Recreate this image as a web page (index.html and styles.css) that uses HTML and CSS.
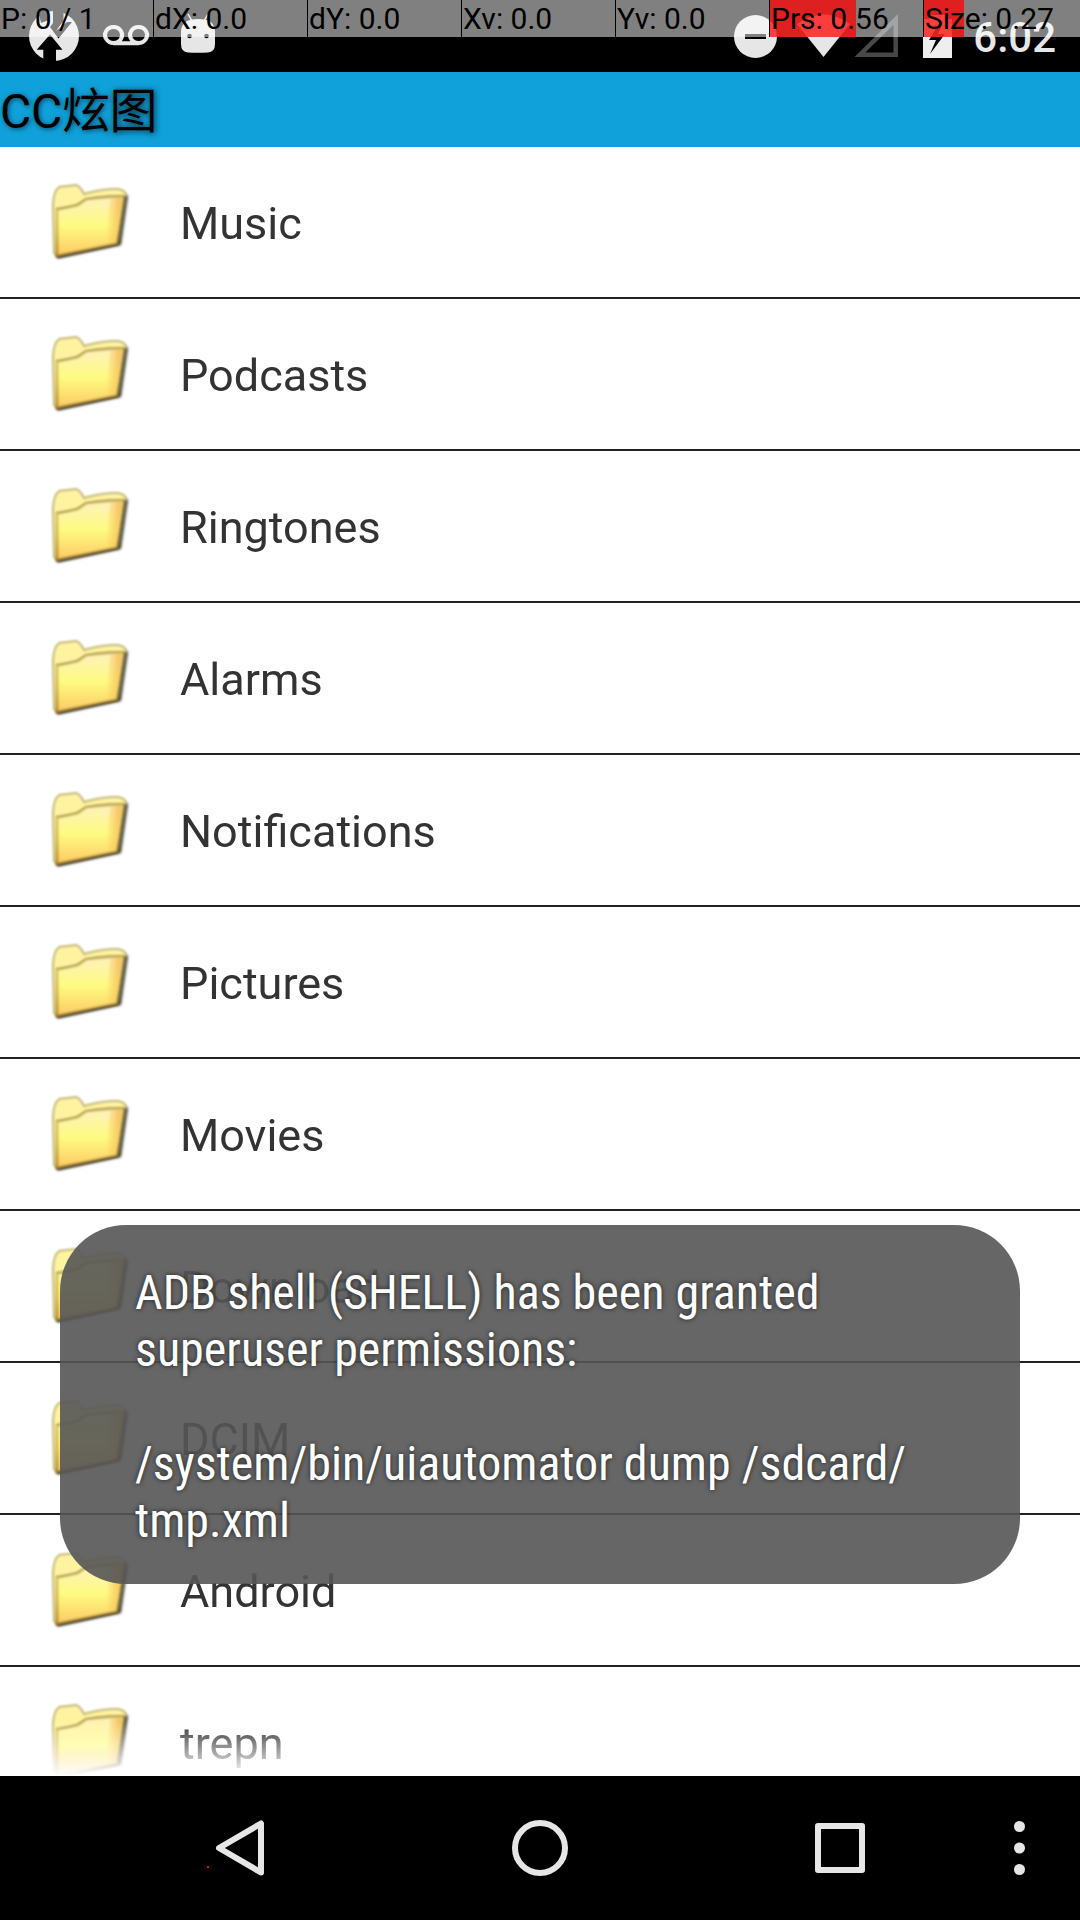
FILE: index.html
```html
<!DOCTYPE html>
<html lang="zh">
<head>
<meta charset="utf-8">
<title>CC炫图</title>
<link rel="stylesheet" href="styles.css">
</head>
<body>
<div class="screen">
  <header class="status">
    <svg class="status-icons" viewBox="0 0 1080 72">
      <g fill="#e6e6e6">
        <circle cx="54" cy="36" r="25"/>
        <path fill="none" stroke="#e6e6e6" stroke-width="4" d="M113.500 27a8.500 8 0 1 0 .1 0zM138.500 27a8.500 8 0 1 0 .1 0zM113 43.200h26"/>
        <path d="M181 32q0-13 17-13t17 13v12q0 8-7 8.500-10 .7-20 0-7-.5-7-8.500z"/>
        <path fill="none" stroke="#e6e6e6" stroke-width="1.500" d="M188 14l4 7M208 14l-4 7"/>
        <circle cx="755.500" cy="36.500" r="21.500"/>
        <path d="M797 24q26.500-19 53 0l-26.500 33z"/>
        <path fill="#eee" d="M923 19h7v-4h15v4h7v39h-29z"/>
      </g>
      <g fill="#000">
        <path d="M50 34.500l12.500 15.200H56V62H43.300V49.700h-6.600z"/>
        <path d="M53 9h10.500v13H72L58.500 38.500 50 27l3-4zM38 9h11v11l-8 3z"/>
        <path fill="#e6e6e6" d="M56 31l11-9h-4.500z"/>
        <circle cx="189.500" cy="36" r="2.300"/><circle cx="206.500" cy="36" r="2.300"/>
        <path d="M745 34h21v5h-21zM940 22l-11 18h7l-6 14 15-20h-7l5-12z"/>
      </g>
      <path fill="none" stroke="#484848" stroke-width="4.500" d="M860 54.700h35.700V19.500z"/>
    </svg>
    <span class="clock">6:02</span>
    <div class="pointer">
      <div class="cell">P: 0 / 1</div>
      <div class="cell">dX: 0.0</div>
      <div class="cell">dY: 0.0</div>
      <div class="cell">Xv: 0.0</div>
      <div class="cell">Yv: 0.0</div>
      <div class="cell pressure">Prs: 0.56</div>
      <div class="cell size">Size: 0.27</div>
    </div>
  </header>
  <h1 class="title">CC炫<span class="glow">图</span></h1>
  <svg class="defs" width="0" height="0">
    <defs>
      <linearGradient id="front" x1="0" y1="0" x2="0" y2="1">
        <stop offset="0" stop-color="#fff0c0"/><stop offset=".5" stop-color="#fdfb80"/><stop offset="1" stop-color="#fdc865"/>
      </linearGradient>
      <linearGradient id="edge" x1="0" y1="0" x2="0" y2="1">
        <stop offset="0" stop-color="#d8cc80"/><stop offset=".6" stop-color="#d6b64c"/><stop offset="1" stop-color="#b08c34"/>
      </linearGradient>
      <linearGradient id="side" x1="0" y1="0" x2="1" y2="0">
        <stop offset="0" stop-color="#fbc860" stop-opacity="0"/><stop offset="1" stop-color="#f5b850"/>
      </linearGradient>
      <filter id="soft" x="-20%" y="-20%" width="140%" height="140%"><feGaussianBlur stdDeviation="1.500"/></filter>
      <filter id="smooth"><feGaussianBlur stdDeviation="1"/></filter>
      <symbol id="folder" viewBox="0 0 120 120">
        <path fill="#444" filter="url(#soft)" d="M28 96.500l63-13.500 7-49-7-3-8 46-58 14z"/>
        <g filter="url(#smooth)">
          <path fill="#fff3a0" stroke="#c0b678" stroke-width="2" d="M23 45q0-15 6-20l17-2q4 1 8 9 18-5 31-5 9 0 11 5l-7 46-62 15-3-2z"/>
          <path fill="url(#front)" stroke="url(#edge)" stroke-width="3" d="M27 47l21-4 8-6 38-3-7 48-60 12z"/>
          <path fill="url(#side)" d="M80 37l12-2-7 45-10 2z"/>
          <path fill="none" stroke="#b19a42" stroke-width="1.700" d="M26 47q14-1 22-5l8-5q20-4 38-3"/>
          <path fill="none" stroke="#6e5a2e" stroke-width="2.200" d="M27 95l61-13 7-48"/>
        </g>
      </symbol>
    </defs>
  </svg>
  <ul class="list">
    <li class="row"><svg class="icon"><use href="#folder"/></svg><span>Music</span></li>
    <li class="row"><svg class="icon"><use href="#folder"/></svg><span>Podcasts</span></li>
    <li class="row"><svg class="icon"><use href="#folder"/></svg><span>Ringtones</span></li>
    <li class="row"><svg class="icon"><use href="#folder"/></svg><span>Alarms</span></li>
    <li class="row"><svg class="icon"><use href="#folder"/></svg><span>Notifications</span></li>
    <li class="row"><svg class="icon"><use href="#folder"/></svg><span>Pictures</span></li>
    <li class="row"><svg class="icon"><use href="#folder"/></svg><span>Movies</span></li>
    <li class="row"><svg class="icon"><use href="#folder"/></svg><span>Download</span></li>
    <li class="row"><svg class="icon"><use href="#folder"/></svg><span>DCIM</span></li>
    <li class="row"><svg class="icon"><use href="#folder"/></svg><span>Android</span></li>
    <li class="row"><svg class="icon"><use href="#folder"/></svg><span>trepn</span></li>
  </ul>
  <nav class="nav">
    <svg viewBox="0 0 1080 144">
      <path fill="none" stroke="#e6e6e6" stroke-width="6" stroke-linejoin="round" d="M261 47.500v49L219 72z"/>
      <circle cx="540" cy="72" r="25" fill="none" stroke="#e6e6e6" stroke-width="6"/>
      <rect x="818" y="50" width="44" height="44" fill="none" stroke="#e6e6e6" stroke-width="6" stroke-linejoin="round"/>
      <g fill="#e6e6e6"><circle cx="1019.500" cy="50.500" r="5.500"/><circle cx="1019.500" cy="72" r="5.500"/><circle cx="1019.500" cy="93.500" r="5.500"/></g>
      <rect x="207" y="90" width="2" height="2" fill="#f00"/>
    </svg>
  </nav>
  <div class="toast"><p>ADB shell (SHELL) has been granted<br>superuser permissions:<br><br>/system/bin/uiautomator dump /sdcard/<br>tmp.xml</p></div>
</div>
</body>
</html>
```
FILE: styles.css
```css
* { box-sizing: border-box; }
body { margin: 0; background: #fff; font-family: Roboto, "Noto Sans CJK SC", sans-serif; }
.screen { position: relative; width: 1080px; height: 1920px; overflow: hidden; display: flex; flex-direction: column; }
.status { position: relative; flex: none; height: 72px; background: #000; display: flex; justify-content: flex-end; }
.status-icons { position: absolute; inset: 0; width: 1080px; height: 72px; }
.clock { padding-right: 24px; font-size: 42px; font-weight: 500; line-height: 75px; color: #e6e6e6; }
.pointer { position: absolute; inset: 0 0 auto 0; height: 37px; display: grid; grid-template-columns: repeat(6, 153px) 156px; column-gap: 1px; }
.cell { background: rgba(255, 255, 255, .5); box-shadow: 1px 0 #000; padding-left: 1px; font-size: 30px; line-height: 37px; white-space: nowrap; color: #000; }
.pressure { background: linear-gradient(rgba(255, 0, 0, .75), rgba(255, 0, 0, .75)) 0 0 / 86px 37px no-repeat, rgba(255, 255, 255, .5); }
.size { background: linear-gradient(rgba(255, 0, 0, .75), rgba(255, 0, 0, .75)) 0 0 / 40px 37px no-repeat, rgba(255, 255, 255, .5); }
.title { flex: none; margin: 0; height: 75px; background: #10a1da; color: #000; font-size: 48px; font-weight: 400; line-height: 79px; letter-spacing: -.3px; text-shadow: 1px 1px 5px rgba(0, 0, 0, .6); }
.glow { text-shadow: 1px 1px 6px rgba(0, 0, 0, .8); }
.defs { position: absolute; }
.list { flex: 1; min-height: 0; overflow: hidden; margin: 0; padding: 0; list-style: none; -webkit-mask-image: linear-gradient(#000 calc(100% - 54px), transparent); mask-image: linear-gradient(#000 calc(100% - 54px), transparent); }
.row { display: flex; align-items: center; height: 152px; padding: 0 30px; gap: 30px; border-bottom: 2px solid #212121; font-size: 45px; color: #333; }
.icon { width: 120px; height: 120px; }
.row span { padding-top: 3px; }
.nav { flex: none; height: 144px; background: #000; }
.nav svg { display: block; width: 1080px; height: 144px; }
.toast { position: absolute; left: 60px; top: 1225px; width: 960px; height: 359px; padding: 39px 75px; border-radius: 66px; background: rgba(85, 85, 85, .9); color: #fff; }
.toast p { margin: 0; font-family: "Roboto Condensed", Roboto, sans-serif; font-stretch: 75%; font-size: 48px; line-height: 57px; white-space: nowrap; text-shadow: 0 0 5px rgba(0, 0, 0, .7); }
```
